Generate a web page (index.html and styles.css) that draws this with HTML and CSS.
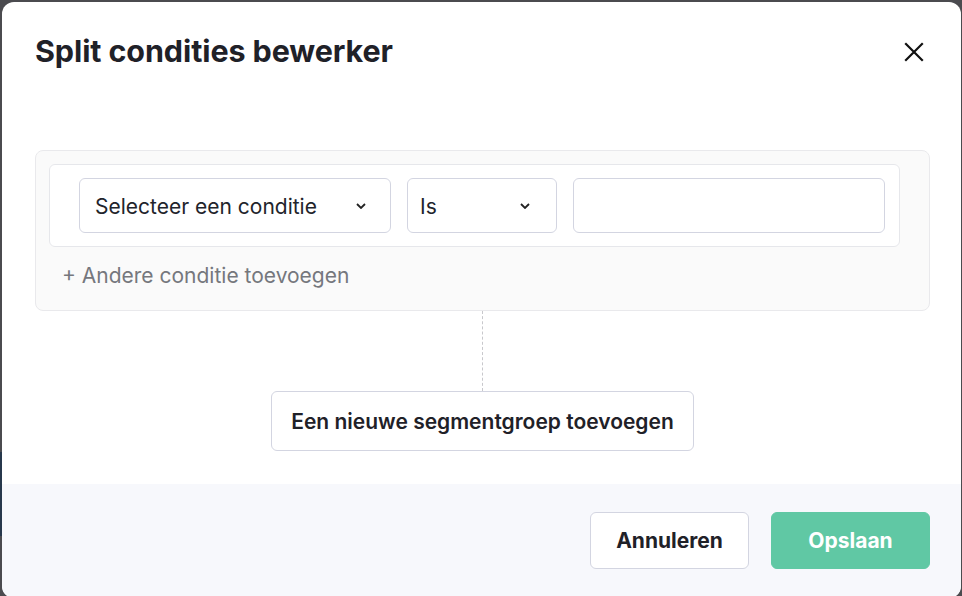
FILE: index.html
```html
<!DOCTYPE html>
<html lang="nl">

<head>
  <meta charset="UTF-8">
  <meta name="viewport" content="width=device-width, initial-scale=1.0">
  <title>Split condities bewerker</title>
  <link rel="stylesheet" href="styles.css">
</head>

<body>
  <div class="backdrop-strip"></div>
  <div id="modal">
    <div class="modal-header">
      <h1>Split condities bewerker</h1>
      <button type="button" class="close" aria-label="Sluiten">
        <svg width="20" height="20" viewBox="0 0 20 20">
          <path d="M2 2 L18 18 M18 2 L2 18" stroke="#111" stroke-width="2.2" stroke-linecap="square" />
        </svg>
      </button>
    </div>

    <div class="modal-body">
      <div class="segment-group">
        <div class="condition-row">
          <div class="select wide">
            <span>Selecteer een conditie</span>
            <svg class="chevron" width="10" height="6" viewBox="0 0 10 6">
              <path d="M1 1 L5 5 L9 1" fill="none" stroke="#222" stroke-width="1.8" />
            </svg>
          </div>
          <div class="select narrow">
            <span>Is</span>
            <svg class="chevron" width="10" height="6" viewBox="0 0 10 6">
              <path d="M1 1 L5 5 L9 1" fill="none" stroke="#222" stroke-width="1.8" />
            </svg>
          </div>
          <input type="text" class="value-input" />
        </div>
        <div class="add-condition">+ Andere conditie toevoegen</div>
      </div>

      <div class="connector"></div>
      <button type="button" class="btn new-group">Een nieuwe segmentgroep toevoegen</button>
    </div>

    <div class="modal-footer">
      <button type="button" class="btn cancel">Annuleren</button>
      <button type="button" class="btn save">Opslaan</button>
    </div>
  </div>
</body>

</html>
```

FILE: styles.css
```css
* {
  margin: 0;
  padding: 0;
  box-sizing: border-box;
}

html, body {
  height: 100%;
  overflow: hidden;
}

body {
  background-color: #4b4b4f;
  font-family: "Inter", "Noto Sans", sans-serif;
  color: #1f2128;
  padding: 2px 1px 0 2px;
  position: relative;
}

.backdrop-strip {
  position: absolute;
  left: 0;
  top: 452px;
  width: 4px;
  height: 84px;
  background-color: #27384c;
}

#modal {
  position: relative;
  background-color: #fff;
  border-radius: 12px;
  height: 596px;
  display: flex;
  flex-direction: column;
  overflow: hidden;
}

.modal-header {
  display: flex;
  justify-content: space-between;
  align-items: flex-start;
  padding: 30px 37px 0 33px;
  height: 148px;
}

.modal-header h1 {
  font-size: 30.5px;
  font-weight: 700;
  line-height: 38px;
  letter-spacing: -0.1px;
}

.close {
  background: none;
  border: none;
  margin-top: 10px;
  cursor: pointer;
}

.modal-body {
  display: flex;
  flex-direction: column;
  align-items: center;
  padding: 0 31px 0 33px;
}

.segment-group {
  align-self: stretch;
  background-color: #fafafa;
  border: 1px solid #e9e9ec;
  border-radius: 8px;
  padding: 13px 29px 0 13px;
  height: 161px;
}

.condition-row {
  display: flex;
  gap: 16px;
  background-color: #fff;
  border: 1px solid #e6e7eb;
  border-radius: 6px;
  padding: 13px 14px 13px 29px;
}

.select,
.value-input {
  height: 55px;
  border: 1px solid #d3d5e1;
  border-radius: 6px;
  background-color: #fff;
  font-family: inherit;
  font-size: 21px;
}

.select {
  flex-shrink: 0;
  display: flex;
  align-items: center;
  justify-content: space-between;
  padding: 1px 24px 0 15px;
  color: #22242b;
}

.select.wide {
  width: 312px;
}

.select.narrow {
  width: 150px;
  padding-left: 12px;
  padding-right: 26px;
}

.value-input {
  flex: 1;
  min-width: 0;
}

.add-condition {
  font-size: 21px;
  color: #75777d;
  padding: 16px 0 0 13px;
}

.connector {
  width: 0;
  height: 80px;
  border-left: 1px dashed #c8c8cc;
}

.btn {
  font-family: inherit;
  font-size: 21px;
  font-weight: 600;
  border-radius: 6px;
  cursor: pointer;
}

.new-group {
  width: 423px;
  height: 60px;
  background-color: #fff;
  border: 1px solid #d3d5e1;
  color: #1f2128;
}

.modal-footer {
  margin-top: auto;
  height: 114px;
  background-color: #f7f8fc;
  display: flex;
  justify-content: flex-end;
  align-items: flex-start;
  gap: 22px;
  padding: 28px 31px 0 0;
}

.cancel,
.save {
  width: 159px;
  height: 57px;
  font-weight: 700;
}

.cancel {
  background-color: #fff;
  border: 1px solid #d3d5e1;
  color: #1f2128;
}

.save {
  background-color: #60c8a4;
  border: 1px solid #60c8a4;
  color: #fff;
}
```
